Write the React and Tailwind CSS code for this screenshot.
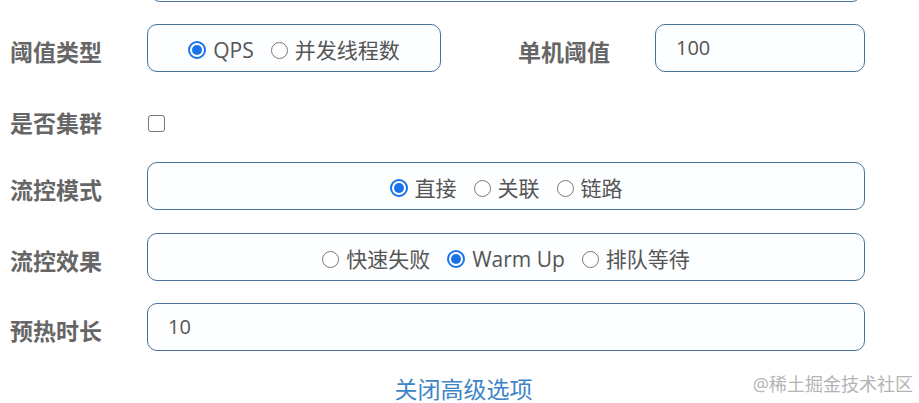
import React from 'react';

const font = { fontFamily: '"Open Sans", "Noto Sans CJK SC", sans-serif' };

// Radio dot drawn by hand so it looks the same everywhere
const Radio = ({ checked, label }) => (
  <span className="inline-flex items-center">
    {checked ? (
      <span className="w-[18px] h-[18px] rounded-full border-[2px] border-[#1a73e8] bg-white flex items-center justify-center">
        <span className="w-[10px] h-[10px] rounded-full bg-[#1a73e8]"></span>
      </span>
    ) : (
      <span className="w-[17px] h-[17px] rounded-full border border-[#767676] bg-white"></span>
    )}
    <span className="ml-[7px] text-[21px] text-[#555] leading-none">{label}</span>
  </span>
);

const RadioBox = ({ options, className = '' }) => (
  <div className={`h-[48px] rounded-[10px] border border-[#4a7299] bg-[#fcfeff] flex items-center justify-center gap-[17px] pt-[4px] ${className}`}>
    {options.map((o) => (
      <Radio key={o.label} checked={o.checked} label={o.label} />
    ))}
  </div>
);

const Label = ({ children, className = '' }) => (
  <div className={`text-[23px] font-bold text-[#666] mt-[9px] leading-none ${className}`}>{children}</div>
);

export default function App() {
  return (
    <div className="w-[919px] h-[403px] overflow-hidden bg-white relative" style={font}>
      {/* tail of the field above */}
      <div className="ml-[150px] w-[712px] h-[48px] -mt-[46px] rounded-[10px] border border-[#4a7299]"></div>

      <div className="pl-[10px]">
        {/* 阈值类型 / 单机阈值 */}
        <div className="flex items-center mt-[22px]">
          <Label className="w-[137px]">阈值类型</Label>
          <RadioBox
            className="w-[294px]"
            options={[
              { label: 'QPS', checked: true },
              { label: '并发线程数', checked: false },
            ]}
          />
          <Label className="w-[137px] ml-[77px]">单机阈值</Label>
          <div className="w-[210px] h-[48px] rounded-[10px] border border-[#4a7299] bg-[#fcfeff] flex items-center pl-[20px] text-[20px] text-[#555] pb-[1px]">
            100
          </div>
        </div>

        {/* 是否集群 */}
        <div className="flex items-center h-[47px] mt-[23px]">
          <Label className="w-[138px]">是否集群</Label>
          <span className="mt-[9px] w-[17px] h-[17px] rounded-[3px] border border-[#767676] bg-white"></span>
        </div>

        {/* 流控模式 */}
        <div className="flex items-center mt-[20px]">
          <Label className="w-[137px]">流控模式</Label>
          <RadioBox
            className="w-[718px]"
            options={[
              { label: '直接', checked: true },
              { label: '关联', checked: false },
              { label: '链路', checked: false },
            ]}
          />
        </div>

        {/* 流控效果 */}
        <div className="flex items-center mt-[23px]">
          <Label className="w-[137px]">流控效果</Label>
          <RadioBox
            className="w-[718px]"
            options={[
              { label: '快速失败', checked: false },
              { label: 'Warm Up', checked: true },
              { label: '排队等待', checked: false },
            ]}
          />
        </div>

        {/* 预热时长 */}
        <div className="flex items-center mt-[22px]">
          <Label className="w-[137px]">预热时长</Label>
          <div className="w-[718px] h-[48px] rounded-[10px] border border-[#4a7299] bg-[#fcfeff] flex items-center pl-[20px] text-[20px] text-[#555] pb-[1px]">
            10
          </div>
        </div>
      </div>

      <div className="mt-[28px] text-center pl-[8px] text-[23px] text-[#3d85c6] leading-[21px]">关闭高级选项</div>

      <div className="absolute right-[6px] bottom-[10px] text-[18px] text-[#b4b4b4] leading-none">@稀土掘金技术社区</div>
    </div>
  );
}
